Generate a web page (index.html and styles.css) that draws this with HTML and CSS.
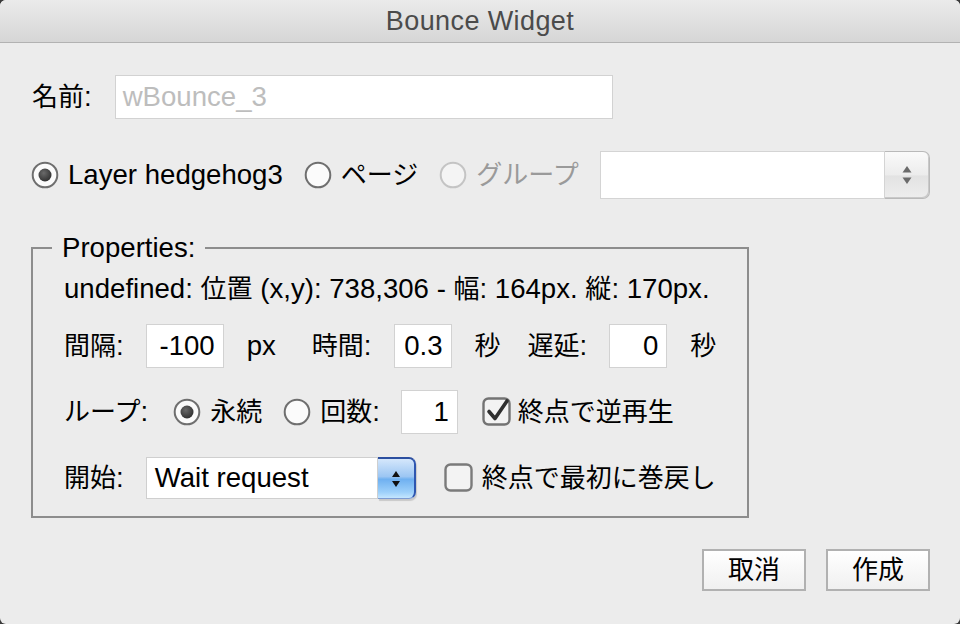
FILE: index.html
```html
<!DOCTYPE html>
<html lang="ja">
<head>
<meta charset="utf-8">
<title>Bounce Widget</title>
<link rel="stylesheet" href="styles.css">
</head>
<body>
<div class="window">
  <div class="titlebar">Bounce Widget</div>
  <div class="content">
    <div class="row name-row">
      <span class="label">名前<span class="en">:</span></span>
      <div class="field name-field placeholder"><span class="en">wBounce_3</span></div>
    </div>

    <div class="row target-row">
      <span class="radio">
        <svg width="28" height="28" viewBox="0 0 28 28"><defs><radialGradient id="dot" cx="0.4" cy="0.35" r="0.7"><stop offset="0" stop-color="#6a6a6a"/><stop offset="1" stop-color="#2e2e2e"/></radialGradient></defs><circle cx="14" cy="14" r="12.3" fill="#fbfbfb" stroke="#6f6f6f" stroke-width="2"/><circle cx="14" cy="14" r="6.5" fill="url(#dot)"/></svg>
        <span class="rlabel en">Layer hedgehog3</span>
      </span>
      <span class="radio">
        <svg width="28" height="28" viewBox="0 0 28 28"><circle cx="14" cy="14" r="12.3" fill="#fbfbfb" stroke="#6f6f6f" stroke-width="2"/></svg>
        <span class="rlabel">ページ</span>
      </span>
      <span class="radio disabled">
        <svg width="28" height="28" viewBox="0 0 28 28"><circle cx="14" cy="14" r="12.3" fill="#f4f4f4" stroke="#c4c4c4" stroke-width="2"/></svg>
        <span class="rlabel">グループ</span>
      </span>
      <div class="combo">
        <div class="combo-box"></div>
        <div class="stepper grey">
          <svg width="14" height="30" viewBox="0 0 14 30"><path d="M7 6 L11.5 12.5 L2.5 12.5 Z" fill="#6a6a6a"/><path d="M7 24 L11.5 17.5 L2.5 17.5 Z" fill="#6a6a6a"/></svg>
        </div>
      </div>
    </div>

    <fieldset class="props">
      <legend><span class="en">Properties:</span></legend>
      <div class="info"><span class="en">undefined: </span>位置<span class="en"> (x,y): 738,306 - </span>幅<span class="en">: 164px. </span>縦<span class="en">: 170px.</span></div>

      <div class="prow">
        <span class="label">間隔<span class="en">:</span></span>
        <div class="field num w78"><span class="en">-100</span></div>
        <span class="unit en">px</span>
        <span class="label grp">時間<span class="en">:</span></span>
        <div class="field num w58"><span class="en">0.3</span></div>
        <span class="unit">秒</span>
        <span class="label grp2">遅延<span class="en">:</span></span>
        <div class="field num w58"><span class="en">0</span></div>
        <span class="unit">秒</span>
      </div>

      <div class="prow">
        <span class="label loop-label">ループ<span class="en">:</span></span>
        <span class="radio">
          <svg width="28" height="28" viewBox="0 0 28 28"><defs><radialGradient id="dot2" cx="0.4" cy="0.35" r="0.7"><stop offset="0" stop-color="#6a6a6a"/><stop offset="1" stop-color="#2e2e2e"/></radialGradient></defs><circle cx="14" cy="14" r="12.3" fill="#fbfbfb" stroke="#6f6f6f" stroke-width="2"/><circle cx="14" cy="14" r="6.5" fill="url(#dot2)"/></svg>
          <span class="rlabel">永続</span>
        </span>
        <span class="radio">
          <svg width="28" height="28" viewBox="0 0 28 28"><circle cx="14" cy="14" r="12.3" fill="#fbfbfb" stroke="#6f6f6f" stroke-width="2"/></svg>
          <span class="rlabel">回数<span class="en">:</span></span>
        </span>
        <div class="field num w57"><span class="en">1</span></div>
        <span class="check">
          <svg width="30" height="30" viewBox="0 0 30 30"><rect x="1.5" y="1.5" width="26" height="26" rx="5" fill="#f3f3f3" stroke="#737373" stroke-width="2.4"/><path d="M7 14.5 L13 21.5 L25 4" fill="none" stroke="#2f2f2f" stroke-width="3.6" stroke-linecap="round" stroke-linejoin="round"/></svg>
          <span class="clabel">終点で逆再生</span>
        </span>
      </div>

      <div class="prow">
        <span class="label">開始<span class="en">:</span></span>
        <div class="combo start-combo">
          <div class="combo-box select-value"><span class="en">Wait request</span></div>
          <div class="stepper blue">
            <svg width="14" height="30" viewBox="0 0 14 30"><path d="M7 7 L11 13 L3 13 Z" fill="#111"/><path d="M7 23 L11 17 L3 17 Z" fill="#111"/></svg>
          </div>
        </div>
        <span class="check rewind">
          <svg width="30" height="30" viewBox="0 0 30 30"><rect x="1.5" y="1.5" width="26" height="26" rx="5" fill="#f3f3f3" stroke="#7a7a7a" stroke-width="2.4"/></svg>
          <span class="clabel">終点で最初に巻戻し</span>
        </span>
      </div>
    </fieldset>

    <div class="buttons">
      <button class="btn">取消</button>
      <button class="btn">作成</button>
    </div>
  </div>
</div>
</body>
</html>
```

FILE: styles.css
```css
html, body {
  margin: 0;
  padding: 0;
  background: #3a3a3a;
}

.window {
  width: 960px;
  height: 624px;
  box-sizing: border-box;
  background: #ececec;
  border-radius: 6px;
  overflow: hidden;
  font-family: "Liberation Sans", "Noto Sans CJK JP", sans-serif;
  font-size: 26px;
  color: #000;
  display: flex;
  flex-direction: column;
}

.en {
  font-size: 27.6px;
}

.titlebar {
  height: 43px;
  box-sizing: border-box;
  border-bottom: 1px solid #b2b2b2;
  background: linear-gradient(#ebebeb, #d6d6d6);
  display: flex;
  align-items: center;
  justify-content: center;
  font-size: 27px;
  letter-spacing: 0.4px;
  color: #4b4b4b;
  padding-top: 1px;
}

.content {
  flex: 1;
  display: flex;
  flex-direction: column;
  padding: 0 30px 0 31px;
}

.row {
  display: flex;
  align-items: center;
}

.name-row {
  margin-top: 32px;
  padding-left: 1px;
}

.label {
  line-height: 30px;
  white-space: nowrap;
}

.field {
  background: #fff;
  border: 1px solid #d2d2d2;
  box-sizing: border-box;
  height: 44px;
  line-height: 42px;
  white-space: nowrap;
}

.name-field {
  margin-left: 23px;
  width: 498px;
  padding-left: 7px;
}

.placeholder {
  color: #bdbdbd;
}

.target-row {
  margin-top: 32px;
  height: 48px;
}

.radio {
  display: flex;
  align-items: center;
  margin-right: 21px;
  white-space: nowrap;
}

.radio svg {
  display: block;
  flex: none;
}

.rlabel {
  margin-left: 9px;
  line-height: 30px;
}

.radio.disabled .rlabel {
  color: #9a9a9a;
}

.combo {
  display: flex;
  height: 48px;
  margin-left: 0;
}

.combo-box {
  width: 285px;
  background: #fff;
  border: 1px solid #d4d4d4;
  box-sizing: border-box;
  height: 48px;
}

.stepper {
  width: 45px;
  box-sizing: border-box;
  display: flex;
  align-items: center;
  justify-content: center;
  border-radius: 0 7px 7px 0;
}

.stepper.grey {
  background: linear-gradient(#fafafa, #ececec 50%, #e2e2e2 52%, #ededed);
  border: 1px solid #b9b9b9;
  border-left: none;
  box-shadow: inset -1px -1px 0 #c9c9c9;
}

.props {
  margin: 34px 0 0 0;
  width: 718px;
  box-sizing: border-box;
  border: 2px solid #8d8d8d;
  padding: 0 0 16px 31px;
  display: flex;
  flex-direction: column;
  min-width: 0;
}

.props legend {
  padding: 0 10px;
  margin-left: -12px;
  line-height: 30px;
  height: 30px;
}

.info {
  margin-top: 11px;
  line-height: 30px;
  white-space: nowrap;
}

.prow {
  display: flex;
  align-items: center;
  margin-top: 20px;
  height: 44px;
}

.prow + .prow {
  margin-top: 22px;
}

.prow > .field {
  margin-left: 22px;
}

.num {
  text-align: right;
  padding-right: 8px;
}

.w78 { width: 78px; }
.w58 { width: 58px; }
.w57 { width: 57px; }

.unit {
  margin-left: 23px;
  line-height: 30px;
}

.grp { margin-left: 36px; }
.grp2 { margin-left: 27px; }

.loop-label {
  margin-right: 25px;
}

.prow .radio {
  margin-right: 21px;
}

.prow .radio + .field {
  margin-left: 0;
}

.check {
  display: flex;
  align-items: center;
  margin-left: 24px;
  white-space: nowrap;
}

.check svg {
  display: block;
  flex: none;
}

.clabel {
  margin-left: 6px;
  line-height: 30px;
}

.start-combo {
  height: 42px;
  margin-left: 22px;
}

.start-combo .combo-box {
  width: 232px;
  height: 42px;
  line-height: 40px;
  padding-left: 8px;
  border-color: #cfcfcf;
  white-space: nowrap;
}

.stepper.blue {
  width: 38px;
  background: linear-gradient(#d5e7fb, #9cc6f3 45%, #6fb0f0 52%, #9dd0fa 85%, #c4e6ff);
  border-top: 2px solid #2c4fa0;
  border-right: 2px solid #2e56b0;
  border-bottom: 1px solid #7c9bd2;
  box-shadow: 1px 2px 1px rgba(0,0,0,0.15);
}

.rewind {
  margin-left: 28px;
}

.rewind .clabel {
  margin-left: 8px;
}

.buttons {
  display: flex;
  justify-content: flex-end;
  margin-top: 31px;
}

.btn {
  width: 104px;
  height: 42px;
  margin-left: 20px;
  box-sizing: border-box;
  border: 2px solid #b1b1b1;
  border-radius: 0;
  background: linear-gradient(#ffffff, #f0f0f0);
  font-family: "Liberation Sans", "Noto Sans CJK JP", sans-serif;
  font-size: 26px;
  color: #000;
  padding: 0;
  line-height: 38px;
}
```
